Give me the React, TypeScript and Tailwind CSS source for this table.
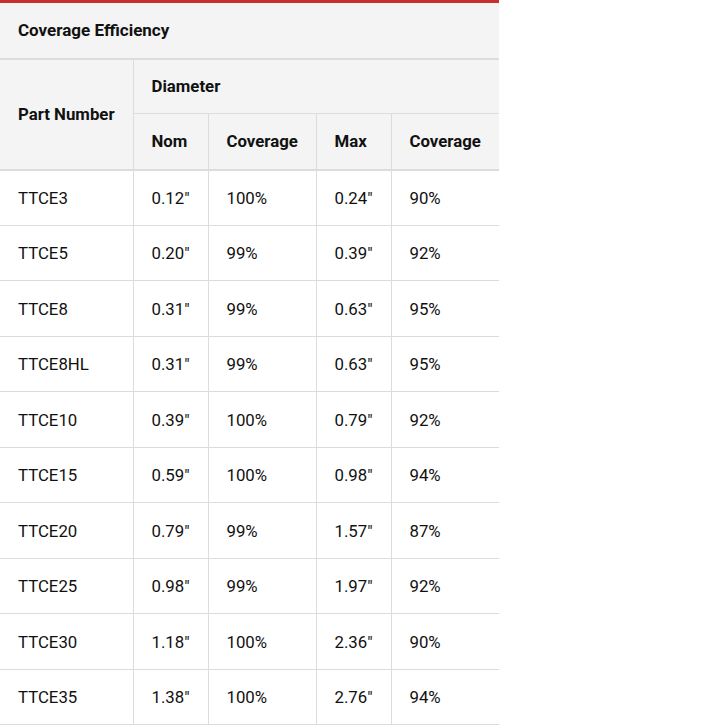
const rows = [
  ["TTCE3", "0.12\"", "100%", "0.24\"", "90%"],
  ["TTCE5", "0.20\"", "99%", "0.39\"", "92%"],
  ["TTCE8", "0.31\"", "99%", "0.63\"", "95%"],
  ["TTCE8HL", "0.31\"", "99%", "0.63\"", "95%"],
  ["TTCE10", "0.39\"", "100%", "0.79\"", "92%"],
  ["TTCE15", "0.59\"", "100%", "0.98\"", "94%"],
  ["TTCE20", "0.79\"", "99%", "1.57\"", "87%"],
  ["TTCE25", "0.98\"", "99%", "1.97\"", "92%"],
  ["TTCE30", "1.18\"", "100%", "2.36\"", "90%"],
  ["TTCE35", "1.38\"", "100%", "2.76\"", "94%"],
];

export default function App() {
  return (
    <div className="bg-white min-h-[726px] font-['Roboto',sans-serif] text-[#111]">
      <table className="w-[499px] table-fixed border-collapse border-t-[3px] border-[#c8302c] text-[16.8px] leading-[22px]">
        <colgroup>
          <col className="w-[133px]" />
          <col className="w-[75px]" />
          <col className="w-[108px]" />
          <col className="w-[75px]" />
          <col />
        </colgroup>
        <thead>
          <tr className="bg-[#f4f4f4]">
            <th colSpan={5} className="h-[57px] px-[18px] text-left text-[17px] font-bold border-b-2 border-[#dcdcdc]">
              Coverage Efficiency
            </th>
          </tr>
          <tr className="bg-[#f4f4f4]">
            <th rowSpan={2} className="px-[18px] text-left font-bold whitespace-nowrap border-b-2 border-r border-[#dcdcdc]">
              Part Number
            </th>
            <th colSpan={4} className="h-[55px] px-[18px] text-left font-bold border-b border-[#dcdcdc]">
              Diameter
            </th>
          </tr>
          <tr className="bg-[#f4f4f4]">
            <th className="h-[56px] px-[18px] text-left font-bold border-b-2 border-r border-[#dcdcdc]">Nom</th>
            <th className="px-[18px] text-left font-bold border-b-2 border-r border-[#dcdcdc]">Coverage</th>
            <th className="px-[18px] text-left font-bold border-b-2 border-r border-[#dcdcdc]">Max</th>
            <th className="px-[18px] text-left font-bold border-b-2 border-[#dcdcdc]">Coverage</th>
          </tr>
        </thead>
        <tbody>
          {rows.map((r) => (
            <tr key={r[0]}>
              {r.map((c, i) => (
                <td
                  key={i}
                  className={
                    i < 4
                      ? "h-[55.5px] px-[18px] pt-[1px] border-b border-r border-[#dcdcdc]"
                      : "h-[55.5px] px-[18px] pt-[1px] border-b border-[#dcdcdc]"
                  }
                >
                  {c}
                </td>
              ))}
            </tr>
          ))}
        </tbody>
      </table>
    </div>
  );
}
